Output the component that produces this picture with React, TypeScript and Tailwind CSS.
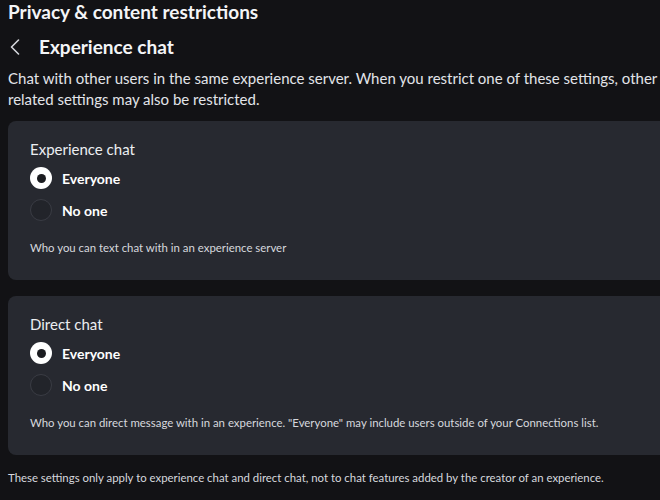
import React, { useState } from 'react';

const font = { fontFamily: 'Lato, "Noto Sans", sans-serif' };

interface RadioGroupProps {
  title: string;
  help: string;
}

const Radio: React.FC<{ checked: boolean; label: string; onClick: () => void }> = ({ checked, label, onClick }) => (
  <button type="button" onClick={onClick} className="flex items-center gap-[10px] h-[32px] text-left">
    {checked ? (
      <span className="flex items-center justify-center w-[22px] h-[22px] rounded-full bg-white">
        <span className="w-[9px] h-[9px] rounded-full bg-[#1b1c20]" />
      </span>
    ) : (
      <span className="w-[22px] h-[22px] rounded-full border border-[#3a3c44] bg-[#22242a]" />
    )}
    <span className="text-[14px] font-bold text-white">{label}</span>
  </button>
);

const RadioCard: React.FC<RadioGroupProps> = ({ title, help }) => {
  const [value, setValue] = useState('everyone');
  return (
    <div className="ml-2 -mr-3 rounded-lg bg-[#272930] pl-[22px] pt-[17px] pb-[24px]">
      <div className="text-[15px] text-[#eceef2] leading-[22px] mb-[2px]">{title}</div>
      <Radio checked={value === 'everyone'} label="Everyone" onClick={() => setValue('everyone')} />
      <Radio checked={value === 'none'} label="No one" onClick={() => setValue('none')} />
      <p className="mt-[14px] text-[11.4px] leading-[16px] text-[#d6d8de] whitespace-nowrap">{help}</p>
    </div>
  );
};

export default function App() {
  return (
    <div style={font} className="w-[660px] h-[500px] overflow-hidden bg-[#121215] text-white">
      <div className="px-2 -mt-[2px]">
        <h1 className="text-[19px] font-bold leading-[28px] text-[#f4f5f7] whitespace-nowrap">Privacy &amp; content restrictions</h1>
      </div>
      <div className="flex items-center h-[34px] mt-[4px] pl-[10px]">
        <svg width="10" height="16" viewBox="0 0 10 16" fill="none" className="mr-[19px]">
          <path d="M8.5 1 L1.5 8 L8.5 15" stroke="#d4d6dc" strokeWidth="1.6" strokeLinecap="round" strokeLinejoin="round" />
        </svg>
        <h2 className="text-[19px] font-bold text-[#f4f5f7]">Experience chat</h2>
      </div>
      <p className="px-2 mt-[4px] text-[15px] leading-[21px] text-[#e2e4e9] whitespace-nowrap">
        Chat with other users in the same experience server. When you restrict one of these settings, other
        <br />
        related settings may also be restricted.
      </p>
      <div className="mt-[11px]">
        <RadioCard title="Experience chat" help="Who you can text chat with in an experience server" />
      </div>
      <div className="mt-[16px]">
        <RadioCard
          title="Direct chat"
          help={'Who you can direct message with in an experience. "Everyone" may include users outside of your Connections list.'}
        />
      </div>
      <p className="px-2 mt-[15px] text-[11.4px] leading-[16px] text-[#d6d8de] whitespace-nowrap">
        These settings only apply to experience chat and direct chat, not to chat features added by the creator of an experience.
      </p>
    </div>
  );
}
